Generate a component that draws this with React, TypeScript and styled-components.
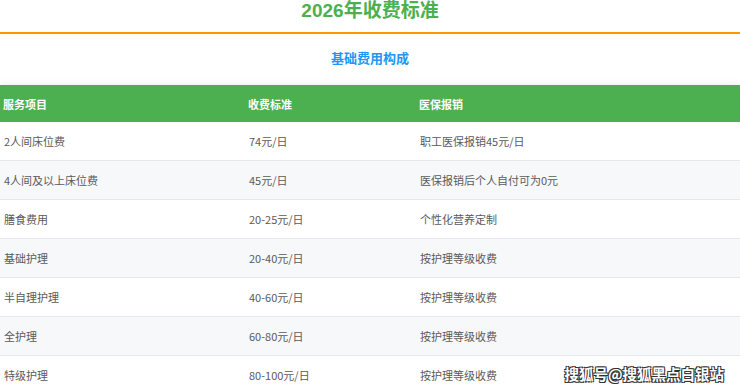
import React, { FunctionComponent } from 'react';
import styled, { createGlobalStyle } from 'styled-components';

const GlobalStyle = createGlobalStyle`
    html, body {
        margin: 0;
        padding: 0;
        background: #ffffff;
        overflow: hidden;
    }
    body {
        font-family: 'Noto Sans CJK SC', 'Noto Sans', sans-serif;
    }
`;

const Page = styled.div`
    position: relative;
    width: 740px;
    height: 391px;
    overflow: hidden;
`;

const Header = styled.header`
    height: 32px;
    border-bottom: 2px solid #ff9800;
    text-align: center;
`;

const Title = styled.h1`
    margin: 0;
    font-family: 'Liberation Sans', 'Noto Sans CJK SC', sans-serif;
    font-size: 19px;
    line-height: 21px;
    font-weight: 700;
    color: #4caf50;
`;

const Subtitle = styled.h2`
    margin: 0;
    padding: 15px 0 18px;
    font-size: 13px;
    line-height: 18px;
    font-weight: 700;
    color: #2196f3;
    text-align: center;
`;

const Table = styled.div`
    box-shadow: 0 -2px 6px rgba(0, 0, 0, 0.06);
`;

const Row = styled.div<{ $striped?: boolean }>`
    display: grid;
    grid-template-columns: 245px 171px 1fr;
    height: 38px;
    align-items: center;
    background: ${(p) => (p.$striped ? '#f7f8fa' : '#ffffff')};
    border-bottom: 1px solid #e6e8eb;
`;

const HeadRow = styled(Row)`
    height: 37px;
    background: #4caf50;
    border-bottom: none;
`;

const Cell = styled.div`
    padding-left: 4px;
    font-size: 11px;
    line-height: 16px;
    color: #5a5a5a;
    white-space: nowrap;
`;

const HeadCell = styled(Cell)`
    padding-left: 3px;
    color: #ffffff;
    font-weight: 700;
`;

const Watermark = styled.div`
    position: absolute;
    right: 16px;
    bottom: 8px;
    font-size: 14.5px;
    line-height: 18px;
    font-weight: 700;
    color: #ffffff;
    text-shadow: -1px -1px 0 #333, 1px -1px 0 #333, -1px 1px 0 #333,
        1px 1px 0 #333;
`;

const rows: [string, string, string][] = [
    ['2人间床位费', '74元/日', '职工医保报销45元/日'],
    ['4人间及以上床位费', '45元/日', '医保报销后个人自付可为0元'],
    ['膳食费用', '20-25元/日', '个性化营养定制'],
    ['基础护理', '20-40元/日', '按护理等级收费'],
    ['半自理护理', '40-60元/日', '按护理等级收费'],
    ['全护理', '60-80元/日', '按护理等级收费'],
    ['特级护理', '80-100元/日', '按护理等级收费']
];

const App: FunctionComponent = () => {
    return (
        <>
            <GlobalStyle />
            <Page>
                <Header>
                    <Title>2026年收费标准</Title>
                </Header>
                <Subtitle>基础费用构成</Subtitle>
                <Table>
                    <HeadRow>
                        <HeadCell>服务项目</HeadCell>
                        <HeadCell>收费标准</HeadCell>
                        <HeadCell>医保报销</HeadCell>
                    </HeadRow>
                    {rows.map(([name, price, note], i) => (
                        <Row key={name} $striped={i % 2 === 1}>
                            <Cell>{name}</Cell>
                            <Cell>{price}</Cell>
                            <Cell>{note}</Cell>
                        </Row>
                    ))}
                </Table>
                <Watermark>搜狐号@搜狐黑点白银站</Watermark>
            </Page>
        </>
    );
};

export default App;
